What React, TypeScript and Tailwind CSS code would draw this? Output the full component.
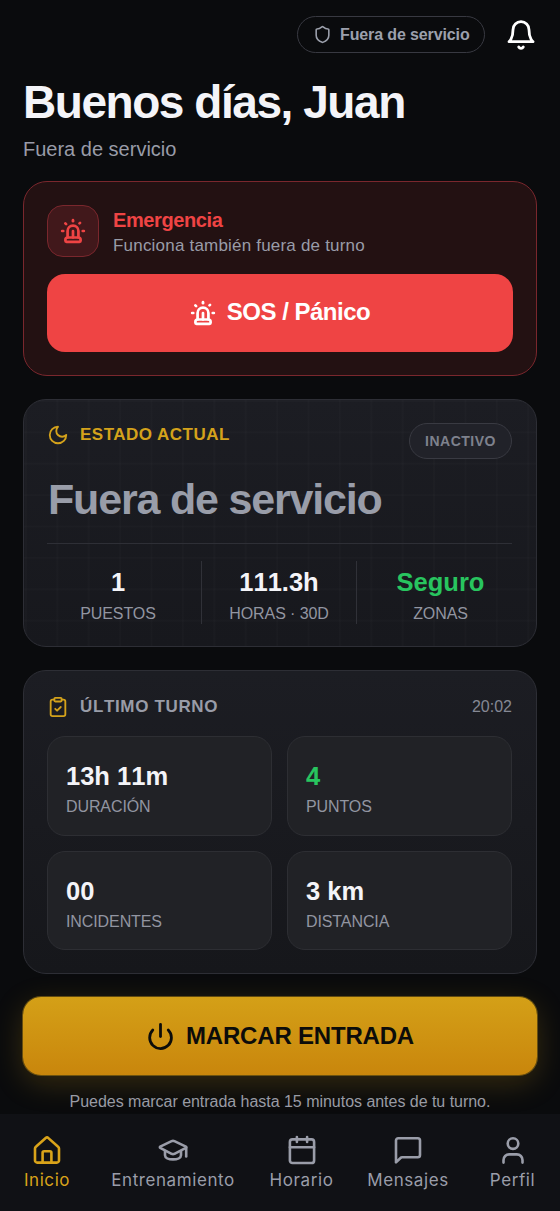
import React from "react";
import { Shield, Siren, ClipboardCheck, Power } from "lucide-react";

type Stat = { value: string; label: string; green?: boolean; className?: string };

const summary: Stat[] = [
  { value: "1", label: "PUESTOS", className: "pr-[12px]" },
  { value: "111.3h", label: "HORAS · 30D" },
  { value: "Seguro", label: "ZONAS", green: true, className: "pl-[12px]" },
];

const shift: Stat[] = [
  { value: "13h 11m", label: "DURACIÓN" },
  { value: "4", label: "PUNTOS", green: true },
  { value: "00", label: "INCIDENTES" },
  { value: "3 km", label: "DISTANCIA" },
];

function LineIcon({ children, className, box = 32, stroke = 2.6 }: { children: React.ReactNode; className: string; box?: number; stroke?: number }) {
  return (
    <svg className={`shrink-0 ${className}`} viewBox={`0 0 ${box} ${box}`} fill="none" stroke="currentColor" strokeWidth={stroke} strokeLinecap="round" strokeLinejoin="round">
      {children}
    </svg>
  );
}

function BellIcon() {
  return (
    <LineIcon className="ml-5 size-8 text-white" box={24} stroke={2.1}>
      <path d="M6 8a6 6 0 0 1 12 0c0 7 3 9 3 9H3s3-2 3-9" />
      <path d="M10.300 21a1.940 1.940 0 0 0 3.400 0" />
    </LineIcon>
  );
}

function MoonIcon() {
  return (
    <LineIcon className="size-[22px]" box={24} stroke={2}>
      <path d="M12 3a6 6 0 0 0 9 9 9 9 0 1 1-9-9Z" />
    </LineIcon>
  );
}

function HomeIcon() {
  return (
    <LineIcon className="size-8">
      <path d="M4 14.600a2.500 2.500 0 0 1 .9-1.900L14.700 4.100a2 2 0 0 1 2.700 0l9.700 8.600a2.500 2.500 0 0 1 .9 1.900V26.400a2.200 2.200 0 0 1-2.200 2.200H6.200A2.200 2.200 0 0 1 4 26.400Z" />
      <path d="M11.600 28.600V18.700a1.500 1.500 0 0 1 1.500-1.500h5.800a1.500 1.500 0 0 1 1.500 1.500v9.900" />
    </LineIcon>
  );
}

function CapIcon() {
  return (
    <LineIcon className="size-8">
      <path d="M3.200 12.600 14.600 7.200a3.200 3.200 0 0 1 2.800 0L28.900 12.600a.7.7 0 0 1 0 1.200l-11.500 6a3.200 3.200 0 0 1-2.800 0L3.200 13.800a.7.7 0 0 1 0-1.200Z" />
      <path d="M29.200 13.600v8.800" />
      <path d="M8 17v4.200c0 2.600 3.500 4.200 8 4.200s8-1.600 8-4.200V17" />
    </LineIcon>
  );
}

function CalendarIcon() {
  return (
    <LineIcon className="size-8">
      <rect x="3.900" y="5.400" width="24.200" height="23.600" rx="2.600" />
      <path d="M10.900 3.100v4.800M21.100 3.100v4.800M3.900 13.200h24.200" />
    </LineIcon>
  );
}

function MessageIcon() {
  return (
    <LineIcon className="size-8">
      <path d="M4 28.400V6.500a2.200 2.200 0 0 1 2.200-2.200h19.600A2.200 2.200 0 0 1 28 6.500v14.600a2.200 2.200 0 0 1-2.200 2.200H10.100a2.200 2.200 0 0 0-1.600.7Z" />
    </LineIcon>
  );
}

function PersonIcon() {
  return (
    <LineIcon className="size-8">
      <circle cx="16" cy="9.600" r="5.300" />
      <path d="M6.500 28.600V26a5.600 5.600 0 0 1 5.600-5.600h7.800a5.600 5.600 0 0 1 5.600 5.600v2.600" />
    </LineIcon>
  );
}

function NavItem({ label, active, className, children }: { label: string; active?: boolean; className: string; children: React.ReactNode }) {
  return (
    <a className={`flex flex-col items-center ${className} ${active ? "text-[#d9a31a]" : "text-[#9a9da9]"}`}>
      {children}
      <span className="mt-[2px] whitespace-nowrap font-['Inter',sans-serif] text-[17px] leading-6 tracking-[0.58px]">{label}</span>
    </a>
  );
}

export default function App() {
  return (
    <div className="flex h-[1211px] w-[560px] flex-col overflow-hidden bg-[#0a0b0d] font-['Liberation_Sans',Arial,sans-serif] text-[#f4f4f8]">
      <header className="flex items-center justify-end pt-4 pr-[23px]">
        <div className="flex h-[37px] w-[188px] items-center rounded-full border border-[#383941] pl-[15px] text-[#9ca0ac]">
          <Shield size={19} strokeWidth={2} />
          <span className="ml-[8px] whitespace-nowrap text-[16px] font-bold tracking-[-0.12px]">Fuera de servicio</span>
        </div>
        <BellIcon />
      </header>

      <div className="px-[23px]">
        <h1 className="mt-[21px] text-[46px] leading-[56px] font-bold tracking-[-1.45px] whitespace-nowrap">Buenos días, Juan</h1>
        <p className="mt-[7px] text-[20px] leading-6 text-[#999ca8]">Fuera de servicio</p>
      </div>

      <section className="mx-[23px] mt-5 flex h-[195px] shrink-0 flex-col rounded-[24px] border border-[#7a272d] bg-[#231112] px-[23px] pt-[23px]">
        <div className="flex h-[52px] items-center">
          <div className="flex size-[52px] shrink-0 items-center justify-center rounded-[16px] border border-[#7a272d] bg-[#41181b] text-[#ef4444]">
            <Siren size={26} strokeWidth={2.500} />
          </div>
          <div className="ml-[14px] pt-[2px]">
            <div className="text-[20px] leading-[26px] font-bold tracking-[-0.4px] text-[#ef4444]">Emergencia</div>
            <div className="text-[17px] leading-[25px] tracking-[0.2px] text-[#999ca8]">Funciona también fuera de turno</div>
          </div>
        </div>
        <button className="mt-[17px] flex h-[78px] shrink-0 items-center justify-center rounded-[18px] bg-[#ef4444] text-[24px] font-bold text-white">
          <Siren size={26} strokeWidth={2.500} />
          <span className="ml-[11px] pb-[2px] tracking-[-0.5px]">SOS / Pánico</span>
        </button>
      </section>

      <section className="mx-[23px] mt-[23px] flex h-[248px] shrink-0 flex-col rounded-[23px] border border-[#2d2e35] bg-[linear-gradient(90deg,transparent_1px,rgba(255,255,255,0.01)_1px,rgba(255,255,255,0.01)_2.5px,transparent_2.5px),linear-gradient(rgba(255,255,255,0.01)_1.5px,transparent_1.5px),linear-gradient(#1c1d23,#17181d)] bg-[size:31.4px_31.4px,31.4px_31.4px,100%_100%] pt-[23px] pr-[24px] pl-[23px]">
        <div className="flex h-[36px] items-start justify-between">
          <div className="flex h-[23px] items-center text-[#d4a21b]">
            <MoonIcon />
            <h2 className="ml-[11px] text-[17px] font-bold tracking-[0.48px]">ESTADO ACTUAL</h2>
          </div>
          <div className="flex h-9 w-[103px] items-center justify-center rounded-full border border-[#393a42] bg-[#212229] text-[14px] font-bold tracking-[0.5px] text-[#7e818d]">INACTIVO</div>
        </div>
        <div className="mt-[14px] ml-px h-[52px] text-[43px] leading-[52px] font-bold tracking-[-1.18px] whitespace-nowrap text-[#999da9]">Fuera de servicio</div>
        <div className="mt-[18px] h-px shrink-0 bg-[#2e2f36]" />
        <div className="mt-[17px] grid h-[62px] grid-cols-3 divide-x divide-[#303138]">
          {summary.map((s) => (
            <div key={s.label} className={`flex flex-col items-center pt-[5px] ${s.className ?? ""}`}>
              <div className={`text-[25.500px] leading-8 font-bold [font-kerning:none] ${s.green ? "text-[#28c55f]" : ""}`}>{s.value}</div>
              <div className="mt-[6px] text-[16px] leading-5 tracking-[-0.1px] whitespace-nowrap text-[#9295a1]">{s.label}</div>
            </div>
          ))}
        </div>
      </section>

      <section className="mx-[23px] mt-[23px] h-[304px] shrink-0 rounded-[23px] border border-[#2d2e35] bg-linear-to-b from-[#1c1d23] to-[#16171b] pt-[25px] pr-[24px] pl-[23px]">
        <div className="flex h-[22px] items-center">
          <ClipboardCheck className="text-[#d4a21b]" size={22} strokeWidth={2} />
          <h2 className="ml-[11px] text-[17px] font-bold tracking-[0.65px] text-[#999ca8] [font-kerning:none]">ÚLTIMO TURNO</h2>
          <span className="ml-auto text-[16px] text-[#858894]">20:02</span>
        </div>
        <div className="mt-[18px] grid grid-cols-2 grid-rows-[100px_99px] gap-[15px]">
          {shift.map((s) => (
            <div key={s.label} className="rounded-[18px] border border-[#2d2e33] bg-[#212226] px-[18px] pt-[23px]">
              <div className={`text-[25.500px] leading-8 font-bold [font-kerning:none] ${s.green ? "text-[#28c55f]" : ""}`}>{s.value}</div>
              <div className="mt-[5px] text-[16px] leading-5 tracking-[-0.1px] text-[#9295a1]">{s.label}</div>
            </div>
          ))}
        </div>
      </section>

      <button className="mx-[23px] mt-[23px] flex h-[78px] shrink-0 items-center justify-center rounded-[18px] bg-linear-to-b from-[#d4a017] to-[#c9860c] text-[24px] font-bold text-[#0c0c0a] shadow-[0_8px_30px_rgba(212,160,23,0.22),0_0_0_1px_rgba(212,160,23,0.4)]">
        <Power size={29} strokeWidth={2.300} />
        <span className="ml-[11px] tracking-[-0.2px]">MARCAR ENTRADA</span>
      </button>
      <p className="mt-[18px] h-[21px] shrink-0 text-center text-[16px] leading-[18px] tracking-[-0.03px] text-[#999ba4]">Puedes marcar entrada hasta 15 minutos antes de tu turno.</p>

      <nav className="relative mt-auto flex h-[97px] shrink-0 bg-[#101115] pt-5 pl-[23.500px]">
        <NavItem label="Inicio" active className="w-[47px]"><HomeIcon /></NavItem>
        <NavItem label="Entrenamiento" className="ml-[40px] w-[125px]"><CapIcon /></NavItem>
        <NavItem label="Horario" className="ml-[34px] w-[64px]"><CalendarIcon /></NavItem>
        <NavItem label="Mensajes" className="ml-[34px] w-[81px]"><MessageIcon /></NavItem>
        <NavItem label="Perfil" className="ml-[41px] w-[46px]"><PersonIcon /></NavItem>
      </nav>
    </div>
  );
}
